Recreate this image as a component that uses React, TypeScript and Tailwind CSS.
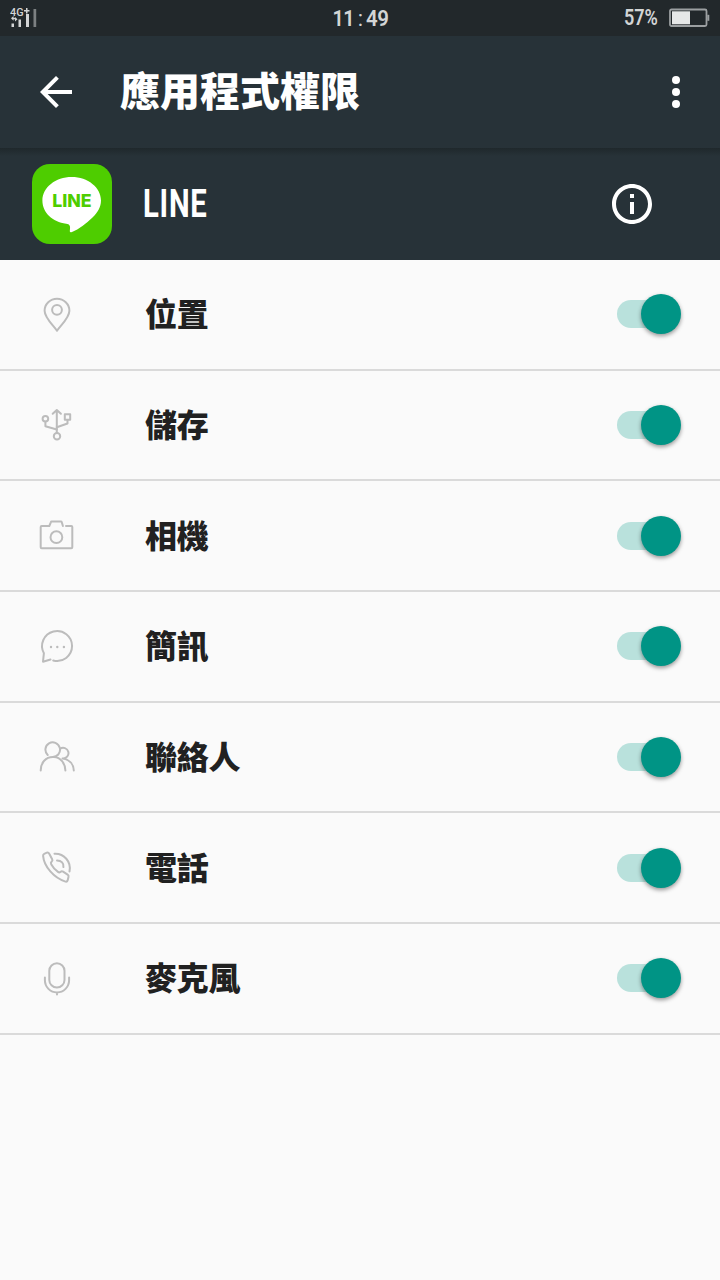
import type { ReactNode } from 'react'

const iconProps = {
  viewBox: '0 0 48 48',
  fill: 'none',
  stroke: 'currentColor',
  strokeWidth: 2,
  strokeLinecap: 'round' as const,
  strokeLinejoin: 'round' as const,
  className: 'mt-px h-12 w-12 text-[#bcbcbc]',
}

const permissions: { name: string; icon: ReactNode }[] = [
  {
    name: '位置',
    icon: (
      <svg {...iconProps}>
        <path d="M25 39.800C21.500 34.500 12.600 27 12.600 19.800a12.400 12.100 0 0 1 24.800 0C37.400 27 28.500 34.500 25 39.800z" />
        <circle cx="25" cy="18.800" r="4.900" />
      </svg>
    ),
  },
  {
    name: '儲存',
    icon: (
      <svg {...iconProps}>
        <path d="M24.800 9.500V32M20.700 12.800l4.100-3.800 4.100 3.800" />
        <circle cx="25" cy="35.300" r="3.200" />
        <circle cx="13.400" cy="17.700" r="2.800" />
        <path d="M13.400 20.800v4.500l11.400 3.200M35.500 19v3.500l-10.700 3.800" />
        <path d="M32.800 13.300h5.400v5.400h-5.400z" />
      </svg>
    ),
  },
  {
    name: '相機',
    icon: (
      <svg {...iconProps}>
        <path d="M34 14h5.300a1 1 0 0 1 1 1v20.200a1 1 0 0 1-1 1H9.700a1 1 0 0 1-1-1V15a1 1 0 0 1 1-1h7.600l1.500-3.700a1 1 0 0 1 1-.7h9a1 1 0 0 1 1 .7l1.100 3.700" />
        <circle cx="24.400" cy="25.200" r="5.900" />
      </svg>
    ),
  },
  {
    name: '簡訊',
    icon: (
      <svg {...iconProps}>
        <path d="M21.200 37.500A15 15 0 1 0 11.900 30.200L11 38.700l7.500-2.200" />
        <g fill="currentColor" stroke="none">
          <circle cx="19" cy="24" r="1.200" />
          <circle cx="25.300" cy="24" r="1.200" />
          <circle cx="31.900" cy="24" r="1.200" />
        </g>
      </svg>
    ),
  },
  {
    name: '聯絡人',
    icon: (
      <svg {...iconProps}>
        <path d="M15.700 22A7.300 7.300 0 1 1 20.700 24C14 24 8.700 29.500 8.700 37.500M22 24c6.500.5 11.200 6 11.400 13.500" />
        <path d="M28 15.900a5.300 5.300 0 1 1 2.500 9.500c5.500.8 11 4.500 11.300 12.100" />
      </svg>
    ),
  },
  {
    name: '電話',
    icon: (
      <svg {...iconProps}>
        <path d="M12.200 9.800l2.600-1.100c1-.4 1.800 0 2.300.9l3.100 5.600c.5 1 .2 1.800-.5 2.400-1 .8-1 1.700-.5 2.600 1.700 3.200 4 5.700 6.800 7.700.8.6 1.700.6 2.400 0 .9-.8 1.700-.9 2.700-.3l4.500 3c.9.600 1.200 1.300.9 2.300l-.9 3.500c-.3 1-1 1.500-2.100 1.200C22 34.100 12 22.600 11.100 11.900c-.1-1 .2-1.700 1.100-2.100z" />
        <path d="M22.500 9.700c9.500-.5 17 8 15 17.800M25 16.400c4.500 0 7 3 6.400 6.700" />
      </svg>
    ),
  },
  {
    name: '麥克風',
    icon: (
      <svg {...iconProps}>
        <rect x="17.300" y="8.200" width="15.200" height="24.300" rx="7.600" />
        <path d="M12.900 22.500v2.800a12.100 12.100 0 0 0 24.200 0v-2.800M25 37.500v2" />
      </svg>
    ),
  },
]

function StatusBar() {
  return (
    <div className="flex h-9 items-center justify-between bg-[#22282b] px-[10px] font-['Roboto',sans-serif] text-[#d3d5d6]">
      <svg viewBox="0 0 40 36" className="h-9 w-[166px]" preserveAspectRatio="xMinYMid meet" fill="currentColor">
        <text x="0" y="16" fontSize="10" fontWeight="500" textLength="13.500" lengthAdjust="spacingAndGlyphs">4G</text>
        <path d="M14 10h5.500v1.500H14zM16 8h1.500v5.500H16z" />
        <path d="M1.500 23.500H4V27H1.500zM8.500 19.500H11V27H8.500zM16 14h3v13h-3z" />
        <path d="M1 18.300L3.500 16v4.700zM7.500 19.300L5 21.500V17zM3 17.700h2.500v1.500H3z" />
        <path d="M23.500 9h2.700v18h-2.700z" fill="#7c8082" />
      </svg>
      <div className="flex h-9 w-[58px] items-center justify-center text-[22px] font-semibold">
        <span className="origin-right scale-x-90 tracking-[-0.5px]">11</span>
        <span className="mr-[3px] ml-[4px] font-normal">:</span>
        <span className="origin-left scale-x-[0.93] tracking-[-0.5px]">49</span>
      </div>
      <div className="flex w-[166px] items-center justify-end gap-[10px]">
        <span className="w-[35px] origin-left scale-x-[0.82] pb-px text-[22px] leading-[35px] font-semibold whitespace-nowrap">57%</span>
        <svg viewBox="0 0 41 20" className="h-5 w-[41px]">
          <rect x="1" y="1.500" width="36.500" height="16.500" rx="1.500" fill="none" stroke="#9b9fa1" strokeWidth="1.800" />
          <rect x="3" y="3.300" width="18" height="13" fill="#e6e8e8" />
          <path d="M38.300 6.800h2v6h-2z" fill="#9b9fa1" />
        </svg>
      </div>
    </div>
  )
}

function Switch() {
  return (
    <button role="switch" aria-checked="true" className="flex h-10 w-16 items-center">
      <span className="h-7 w-11 rounded-l-full bg-[#b9e1dc]" />
      <span className="-ml-5 h-10 w-10 shrink-0 rounded-full bg-[#009485] shadow-[0_2px_4px_rgba(0,0,0,0.4)]" />
    </button>
  )
}

export default function App() {
  return (
    <div className="h-[1280px] w-[720px] overflow-hidden bg-[#fafafa] font-['Noto_Sans_CJK_TC',sans-serif]">
      <StatusBar />
      <header className="flex h-28 items-center bg-[#273238] pr-5 pl-8 text-white">
        <svg viewBox="0 0 24 24" className="h-12 w-12" fill="currentColor">
          <path d="M20 11H7.830l5.590-5.590L12 4l-8 8 8 8 1.410-1.410L7.830 13H20v-2z" />
        </svg>
        <h1 className="ml-10 flex-1 pb-[6px] text-[40px] leading-[56px] font-black">應用程式權限</h1>
        <svg viewBox="0 0 24 24" className="h-12 w-12" fill="currentColor">
          <circle cx="12" cy="6" r="2" />
          <circle cx="12" cy="12" r="2" />
          <circle cx="12" cy="18" r="2" />
        </svg>
      </header>
      <section className="flex h-28 items-center bg-[#273238] bg-linear-to-b from-[#1f282c] from-0% to-[#273238] to-[8px] pr-16 pl-8 text-white">
        <svg viewBox="0 0 80 80" className="h-20 w-20">
          <rect width="80" height="80" rx="18" fill="#4ecd00" />
          <path
            d="M39.700 12.900c16.200 0 29.300 10.500 29.300 23.500 0 6.500-3.500 12.200-8.500 17C54 59.700 47 65 40 68c-2.500 1-2.300-.5-2-3 .4-3-.3-4.900-3.800-5.300C20.500 57.800 10.400 48.500 10.400 36.400c0-13 13.100-23.500 29.300-23.500z"
            fill="#fff"
          />
          <text x="20.200" y="43.300" fontSize="18" fontWeight="800" textLength="39.500" lengthAdjust="spacingAndGlyphs" fill="#4ecd00" fontFamily="Inter, sans-serif">LINE</text>
        </svg>
        <div className="ml-[31px] flex-1">
          <span className="inline-block origin-left scale-x-[0.77] font-['Roboto',sans-serif] text-[38px] leading-[48px] font-bold tracking-[1px]">LINE</span>
        </div>
        <svg viewBox="0 0 24 24" className="h-12 w-12" fill="currentColor">
          <path d="M11 7h2v2h-2zm0 4h2v6h-2zm1-9C6.480 2 2 6.480 2 12s4.480 10 10 10 10-4.480 10-10S17.520 2 12 2zm0 18c-4.410 0-8-3.590-8-8s3.590-8 8-8 8 3.590 8 8-3.590 8-8 8z" />
        </svg>
      </section>
      <ul>
        {permissions.map((permission) => (
          <li
            key={permission.name}
            className="flex h-[110.670px] items-center border-b-2 border-[#dadada] pr-[39px] pl-8"
          >
            {permission.icon}
            <span className="ml-[65px] flex-1 pb-1 text-[32px] leading-[48px] font-black tracking-[-0.2px] text-[#212121]">
              {permission.name}
            </span>
            <Switch />
          </li>
        ))}
      </ul>
    </div>
  )
}
